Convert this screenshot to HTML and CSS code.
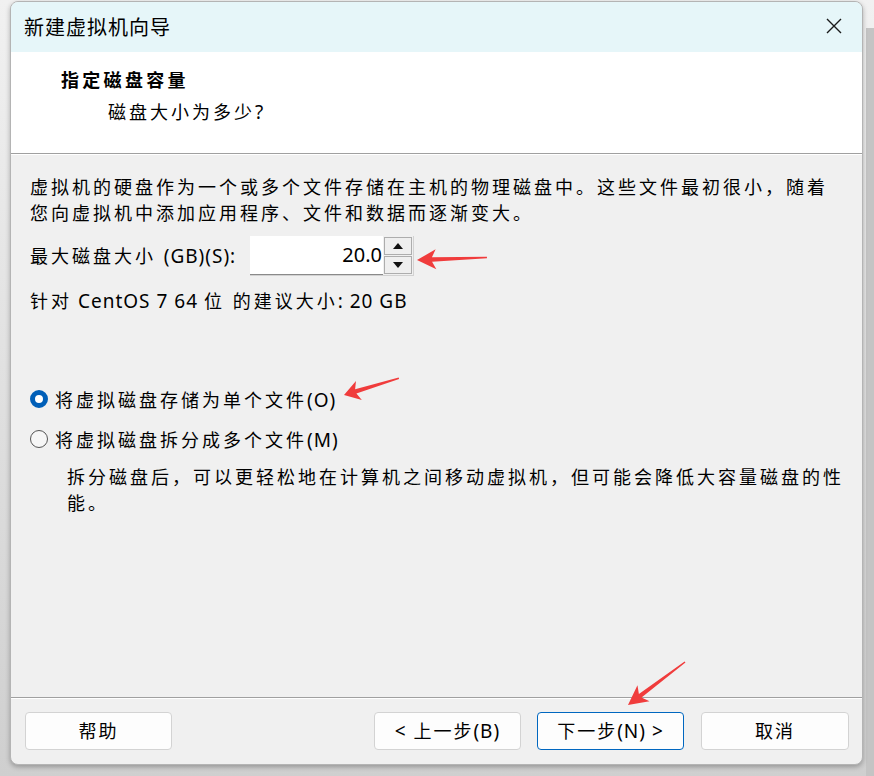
FILE: index.html
```html
<!DOCTYPE html>
<html lang="zh-CN">
<head>
<meta charset="utf-8">
<title>新建虚拟机向导</title>
<link rel="stylesheet" href="styles.css">
</head>
<body>
<div class="win">
  <div class="titlebar">
    <span class="title">新建虚拟机向导</span>
    <svg class="close" width="16" height="16" viewBox="0 0 16 16"><path d="M1 1 L15 15 M15 1 L1 15" stroke="#1a1a1a" stroke-width="1.4" fill="none"/></svg>
  </div>
  <div class="header">
    <div class="h1">指定磁盘容量</div>
    <div class="h2">磁盘大小为多少<span class="lat">?</span></div>
  </div>
  <div class="content">
    <p class="para">虚拟机的硬盘作为一个或多个文件存储在主机的物理磁盘中。这些文件最初很小，随着<br>您向虚拟机中添加应用程序、文件和数据而逐渐变大。</p>
    <div class="sizerow">
      <span class="label">最大磁盘大小 <span class="lat">(GB)(S):</span></span>
      <div class="spin">
        <div class="spinval">20.0</div>
        <div class="spinbtns">
          <div class="sbtn"><svg width="10" height="6" viewBox="0 0 10 6"><path d="M0 6 L5 0 L10 6Z" fill="#111"/></svg></div>
          <div class="sbtn"><svg width="10" height="6" viewBox="0 0 10 6"><path d="M0 0 L5 6 L10 0Z" fill="#111"/></svg></div>
        </div>
      </div>
    </div>
    <p class="rec">针对<span class="lat"> CentOS 7 64 </span>位 的建议大小<span class="lat">: 20 GB</span></p>
    <div class="radio first"><span class="dot on"></span><span>将虚拟磁盘存储为单个文件<span class="lat">(O)</span></span></div>
    <div class="radio"><span class="dot"></span><span>将虚拟磁盘拆分成多个文件<span class="lat">(M)</span></span></div>
    <p class="desc">拆分磁盘后，可以更轻松地在计算机之间移动虚拟机，但可能会降低大容量磁盘的性<br>能。</p>
  </div>
  <div class="footer">
    <button class="btn">帮助</button>
    <button class="btn back"><span class="lat">&lt;</span> 上一步<span class="lat">(B)</span></button>
    <button class="btn next">下一步<span class="lat">(N) &gt;</span></button>
    <button class="btn cancel">取消</button>
  </div>
</div>
<svg class="arrows" width="874" height="776" viewBox="0 0 874 776">
  <defs>
    <polygon id="arr" points="0,0 19,-10 15,-2.2 70,-0.7 70,0.7 15,2.2 19,10"/>
  </defs>
  <use href="#arr" fill="#f03c3c" transform="translate(417 260) rotate(-2)"/>
  <use href="#arr" fill="#f03c3c" transform="translate(344 395) rotate(-17) scale(0.82 1)"/>
  <use href="#arr" fill="#f03c3c" transform="translate(628 705) rotate(-37) scale(1.02 1)"/>
</svg>
</body>
</html>
```
FILE: styles.css
```css
html, body {
  margin: 0;
  padding: 0;
}
body {
  width: 874px;
  height: 776px;
  overflow: hidden;
  padding: 1px 0 0 10px;
  box-sizing: border-box;
  position: relative;
  background:
    linear-gradient(#c4c4c4, #c4c4c4) 866px 28px / 8px 100% no-repeat,
    linear-gradient(#f1f1f1, #cfcfcf);
  font-family: "Noto Sans", "Noto Sans CJK SC", sans-serif;
  color: #000;
  font-size: 18px;
  letter-spacing: 3px;
}
.lat {
  font-size: 19px;
  letter-spacing: 1px;
}
.win {
  width: 853px;
  height: 764px;
  box-sizing: border-box;
  border: 1px solid #b4b4b4;
  border-radius: 8px;
  overflow: hidden;
  display: flex;
  flex-direction: column;
  background: #f0f0f0;
  box-shadow: 0 2px 5px rgba(0, 0, 0, 0.28);
}
.titlebar {
  height: 50px;
  flex: none;
  background: #e6f6f9;
  display: flex;
  align-items: center;
  padding: 0 20px 0 13px;
}
.title {
  font-size: 20px;
  letter-spacing: 1px;
  flex: 1;
  margin-top: -2px;
}
.close {
  display: block;
  margin-top: -2px;
}
.header {
  height: 101px;
  flex: none;
  background: #fff;
  border-bottom: 1px solid #a0a0a0;
  box-sizing: content-box;
  padding: 0;
}
.h1 {
  font-weight: bold;
  line-height: 26px;
  padding: 15px 0 0 50px;
  letter-spacing: 3.3px;
}
.h2 {
  line-height: 26px;
  margin-top: 6px;
  padding-left: 97px;
}
.content {
  flex: 1;
  border-top: 1px solid #fff;
  padding: 19px 0 0 19px;
}
.content p {
  margin: 0;
}
.para {
  line-height: 26px;
  white-space: nowrap;
}
.sizerow {
  display: flex;
  align-items: center;
  margin-top: 10px;
  height: 40px;
}
.label {
  line-height: 26px;
  width: 220px;
}
.spin {
  display: flex;
  height: 40px;
  box-sizing: border-box;
  border: 1px solid #d2d2d2;
  border-left: none;
  border-top: none;
  background: #f0f0f0;
}
.spinval {
  width: 133px;
  height: 39px;
  box-sizing: border-box;
  background: #fff;
  border-bottom: 1px solid #8a8a8a;
  text-align: right;
  font-size: 20px;
  line-height: 38px;
  letter-spacing: 0;
  padding-right: 1px;
}
.spinbtns {
  display: flex;
  flex-direction: column;
  gap: 1px;
  padding: 1px 1px 0 1px;
}
.sbtn {
  width: 28px;
  height: 18px;
  box-sizing: border-box;
  border: 1px solid #adadad;
  background: #efefef;
  display: flex;
  align-items: center;
  justify-content: center;
}
.sbtn svg {
  display: block;
}
.rec {
  margin-top: 12px !important;
  line-height: 26px;
}
.radio {
  display: flex;
  align-items: center;
  height: 26px;
  margin-top: 14px;
}
.radio.first {
  margin-top: 72px;
}
.dot {
  width: 18px;
  height: 18px;
  box-sizing: border-box;
  border-radius: 50%;
  border: 1px solid #555;
  background: #f6f6f6;
  margin-right: 7px;
  flex: none;
}
.dot.on {
  border: 5px solid #005fb8;
  background: #fff;
}
.desc {
  margin: 12px 0 0 37px !important;
  line-height: 26px;
  white-space: nowrap;
}
.footer {
  height: 67px;
  box-sizing: border-box;
  flex: none;
  border-top: 1px solid #a0a0a0;
  box-shadow: inset 0 1px 0 #fff;
  display: flex;
  align-items: flex-start;
  padding: 14px 13px 0 14px;
}
.btn {
  width: 147px;
  height: 38px;
  box-sizing: border-box;
  border: 1px solid #d3d3d3;
  border-radius: 4px;
  background: #fdfdfd;
  font-family: inherit;
  font-size: 18px;
  letter-spacing: 2px;
  color: #000;
  padding: 0;
  line-height: 36px;
}
.btn .lat {
  font-size: 19px;
  letter-spacing: 1px;
}
.btn.back {
  margin-left: auto;
}
.btn.next {
  margin-left: 16px;
  border-color: #0067c0;
}
.btn.cancel {
  margin-left: 17px;
  width: 148px;
}
.arrows {
  position: absolute;
  left: 0;
  top: 0;
  pointer-events: none;
}
```
